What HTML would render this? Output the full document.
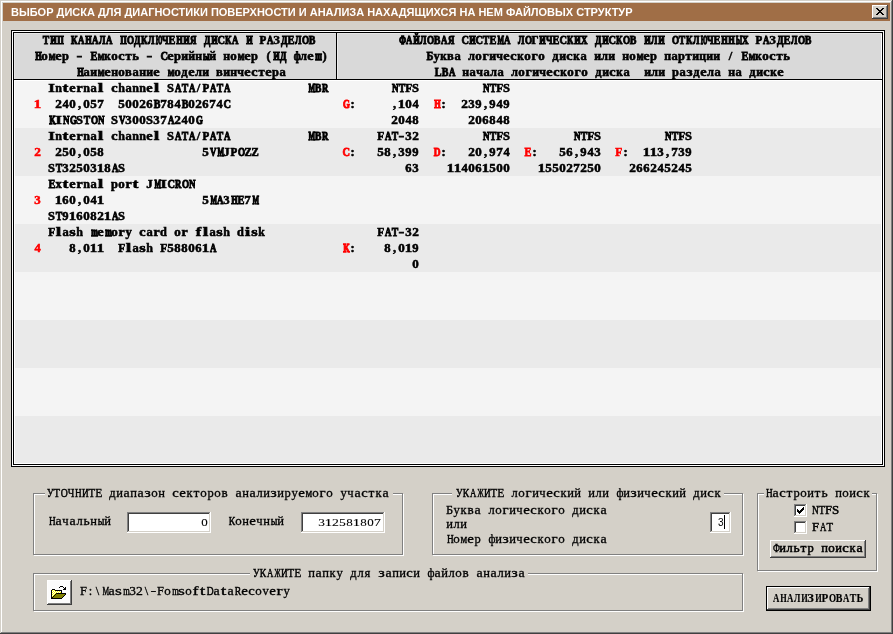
<!DOCTYPE html>
<html><head><meta charset="utf-8">
<style>
html,body{margin:0;padding:0;}
body{width:893px;height:634px;overflow:hidden;position:relative;background:#D4D0C8;}
.a{position:absolute;}
.ln,.hd,.lb,.title{will-change:transform;}
.ln,.hd,.lb,.title{position:absolute;white-space:pre;color:#000;}
.ln,.hd{font-family:"Liberation Serif",serif;font-weight:bold;font-size:12.5px;line-height:16px;-webkit-text-stroke:0.55px #000;}
.ln i,.hd i,.lb i{font-style:normal;display:inline-block;width:7px;text-align:center;}
.ln{left:0;}
.r{color:#FF0000;-webkit-text-stroke-color:#FF0000;}
.lb{font-family:"Liberation Serif",serif;font-size:12.5px;line-height:16px;-webkit-text-stroke:0.3px #000;}
.numc{font-size:11px !important;-webkit-text-stroke:0.1px #000 !important;}
.num{position:absolute;white-space:pre;color:#000;will-change:transform;font-family:"Liberation Sans",sans-serif;font-size:10px;letter-spacing:1.44px;line-height:16px;}
.title{font-family:"Liberation Sans",sans-serif;font-weight:bold;font-size:11px;line-height:18px;color:#FFFFFF;}
</style></head><body>
<div class="a" style="left:1px;top:1px;width:890px;height:1px;background:#FFFFFF;"></div>
<div class="a" style="left:1px;top:1px;width:1px;height:631px;background:#FFFFFF;"></div>
<div class="a" style="left:891px;top:1px;width:1px;height:632px;background:#808080;"></div>
<div class="a" style="left:1px;top:632px;width:891px;height:1px;background:#808080;"></div>
<div class="a" style="left:892px;top:0px;width:1px;height:634px;background:#404040;"></div>
<div class="a" style="left:0px;top:633px;width:893px;height:1px;background:#404040;"></div>
<div class="a" style="left:3px;top:3px;width:887px;height:18px;background:#A06E46;"></div>
<div class="title" style="left:11px;top:3px;">ВЫБОР ДИСКА ДЛЯ ДИАГНОСТИКИ ПОВЕРХНОСТИ И АНАЛИЗА НАХАДЯЩИХСЯ НА НЕМ ФАЙЛОВЫХ СТРУКТУР</div>
<div class="a" style="left:872px;top:5px;width:16px;height:14px;background:#D4D0C8;"></div>
<div class="a" style="left:872px;top:5px;width:16px;height:1px;background:#FFFFFF;"></div>
<div class="a" style="left:872px;top:5px;width:1px;height:14px;background:#FFFFFF;"></div>
<div class="a" style="left:873px;top:17px;width:15px;height:1px;background:#808080;"></div>
<div class="a" style="left:886px;top:6px;width:1px;height:13px;background:#808080;"></div>
<div class="a" style="left:872px;top:18px;width:16px;height:1px;background:#404040;"></div>
<div class="a" style="left:887px;top:5px;width:1px;height:14px;background:#404040;"></div>
<svg class="a" style="left:0;top:0" width="893" height="30"><rect x="876" y="8" width="1" height="1" fill="#000"/><rect x="876" y="14" width="1" height="1" fill="#000"/><rect x="877" y="8" width="1" height="1" fill="#000"/><rect x="877" y="9" width="1" height="1" fill="#000"/><rect x="877" y="13" width="1" height="1" fill="#000"/><rect x="877" y="14" width="1" height="1" fill="#000"/><rect x="878" y="9" width="1" height="1" fill="#000"/><rect x="878" y="10" width="1" height="1" fill="#000"/><rect x="878" y="12" width="1" height="1" fill="#000"/><rect x="878" y="13" width="1" height="1" fill="#000"/><rect x="879" y="10" width="1" height="1" fill="#000"/><rect x="879" y="11" width="1" height="1" fill="#000"/><rect x="879" y="12" width="1" height="1" fill="#000"/><rect x="880" y="10" width="1" height="1" fill="#000"/><rect x="880" y="11" width="1" height="1" fill="#000"/><rect x="880" y="12" width="1" height="1" fill="#000"/><rect x="881" y="9" width="1" height="1" fill="#000"/><rect x="881" y="10" width="1" height="1" fill="#000"/><rect x="881" y="12" width="1" height="1" fill="#000"/><rect x="881" y="13" width="1" height="1" fill="#000"/><rect x="882" y="8" width="1" height="1" fill="#000"/><rect x="882" y="9" width="1" height="1" fill="#000"/><rect x="882" y="13" width="1" height="1" fill="#000"/><rect x="882" y="14" width="1" height="1" fill="#000"/><rect x="883" y="8" width="1" height="1" fill="#000"/><rect x="883" y="14" width="1" height="1" fill="#000"/></svg>
<div class="a" style="left:11px;top:30px;width:874px;height:437px;background:#000;"></div>
<div class="a" style="left:12px;top:31px;width:872px;height:435px;background:#FFFFFF;"></div>
<div class="a" style="left:13px;top:32px;width:870px;height:433px;background:#000;"></div>
<div class="a" style="left:14px;top:33px;width:868px;height:431px;background:#FFFFFF;"></div>
<div class="a" style="left:15px;top:34px;width:866px;height:45px;background:#D9D9D9;"></div>
<div class="a" style="left:14px;top:33px;width:868px;height:1px;background:#E6E6E6;"></div>
<div class="a" style="left:14px;top:33px;width:1px;height:46px;background:#E6E6E6;"></div>
<div class="a" style="left:14px;top:79px;width:868px;height:1px;background:#000;"></div>
<div class="a" style="left:336px;top:33px;width:1px;height:46px;background:#000;"></div>
<div class="a" style="left:337px;top:34px;width:1px;height:45px;background:#ECECEC;"></div>
<div class="a" style="left:15px;top:81px;width:866px;height:47px;background:#F4F4F4;"></div>
<div class="a" style="left:15px;top:128px;width:866px;height:48px;background:#EAEAEA;"></div>
<div class="a" style="left:15px;top:176px;width:866px;height:48px;background:#F4F4F4;"></div>
<div class="a" style="left:15px;top:224px;width:866px;height:48px;background:#EAEAEA;"></div>
<div class="a" style="left:15px;top:272px;width:866px;height:48px;background:#F4F4F4;"></div>
<div class="a" style="left:15px;top:320px;width:866px;height:48px;background:#EAEAEA;"></div>
<div class="a" style="left:15px;top:368px;width:866px;height:48px;background:#F4F4F4;"></div>
<div class="a" style="left:15px;top:416px;width:866px;height:47px;background:#EAEAEA;"></div>
<div class="hd" style="left:42px;top:32px;"><i style="transform:scaleX(0.780);-webkit-text-stroke-width:0.90px">Т</i><i style="transform:scaleX(0.667);-webkit-text-stroke-width:1.24px">И</i><i style="transform:scaleX(0.671);-webkit-text-stroke-width:1.22px">П</i><i> </i><i style="transform:scaleX(0.709);-webkit-text-stroke-width:1.09px">К</i><i style="transform:scaleX(0.703);-webkit-text-stroke-width:1.11px">А</i><i style="transform:scaleX(0.667);-webkit-text-stroke-width:1.24px">Н</i><i style="transform:scaleX(0.703);-webkit-text-stroke-width:1.11px">А</i><i style="transform:scaleX(0.683);-webkit-text-stroke-width:1.18px">Л</i><i style="transform:scaleX(0.703);-webkit-text-stroke-width:1.11px">А</i><i> </i><i style="transform:scaleX(0.671);-webkit-text-stroke-width:1.22px">П</i><i style="transform:scaleX(0.729);-webkit-text-stroke-width:1.03px">О</i><i style="transform:scaleX(0.741);-webkit-text-stroke-width:1.00px">Д</i><i style="transform:scaleX(0.709);-webkit-text-stroke-width:1.09px">К</i><i style="transform:scaleX(0.683);-webkit-text-stroke-width:1.18px">Л</i><i style="transform:scaleX(0.468);-webkit-text-stroke-width:1.30px">Ю</i><i style="transform:scaleX(0.704);-webkit-text-stroke-width:1.11px">Ч</i><i style="transform:scaleX(0.829);-webkit-text-stroke-width:0.80px">Е</i><i style="transform:scaleX(0.667);-webkit-text-stroke-width:1.24px">Н</i><i style="transform:scaleX(0.667);-webkit-text-stroke-width:1.24px">И</i><i style="transform:scaleX(0.704);-webkit-text-stroke-width:1.11px">Я</i><i> </i><i style="transform:scaleX(0.741);-webkit-text-stroke-width:1.00px">Д</i><i style="transform:scaleX(0.667);-webkit-text-stroke-width:1.24px">И</i><i style="transform:scaleX(0.831);-webkit-text-stroke-width:0.80px">С</i><i style="transform:scaleX(0.709);-webkit-text-stroke-width:1.09px">К</i><i style="transform:scaleX(0.703);-webkit-text-stroke-width:1.11px">А</i><i> </i><i style="transform:scaleX(0.667);-webkit-text-stroke-width:1.24px">И</i><i> </i><i style="transform:scaleX(0.877);-webkit-text-stroke-width:0.71px">Р</i><i style="transform:scaleX(0.703);-webkit-text-stroke-width:1.11px">А</i><i>З</i><i style="transform:scaleX(0.741);-webkit-text-stroke-width:1.00px">Д</i><i style="transform:scaleX(0.829);-webkit-text-stroke-width:0.80px">Е</i><i style="transform:scaleX(0.683);-webkit-text-stroke-width:1.18px">Л</i><i style="transform:scaleX(0.729);-webkit-text-stroke-width:1.03px">О</i><i style="transform:scaleX(0.797);-webkit-text-stroke-width:0.87px">В</i></div>
<div class="hd" style="left:34px;top:48px;"><i style="transform:scaleX(0.667);-webkit-text-stroke-width:1.24px">Н</i><i style="transform:scaleX(1.038)">о</i><i style="transform:scaleX(0.795);-webkit-text-stroke-width:0.87px">м</i><i style="transform:scaleX(1.146)">е</i><i style="transform:scaleX(0.986)">р</i><i> </i><i style="transform:scaleX(1.386)">-</i><i> </i><i style="transform:scaleX(0.829);-webkit-text-stroke-width:0.80px">Е</i><i style="transform:scaleX(0.795);-webkit-text-stroke-width:0.87px">м</i><i style="transform:scaleX(0.897);-webkit-text-stroke-width:0.68px">к</i><i style="transform:scaleX(1.038)">о</i><i style="transform:scaleX(1.144)">с</i><i>т</i><i>ь</i><i> </i><i style="transform:scaleX(1.386)">-</i><i> </i><i style="transform:scaleX(0.831);-webkit-text-stroke-width:0.80px">С</i><i style="transform:scaleX(1.146)">е</i><i style="transform:scaleX(0.986)">р</i><i style="transform:scaleX(0.948);-webkit-text-stroke-width:0.61px">и</i><i style="transform:scaleX(0.948);-webkit-text-stroke-width:0.61px">й</i><i style="transform:scaleX(0.948);-webkit-text-stroke-width:0.61px">н</i><i style="transform:scaleX(0.681);-webkit-text-stroke-width:1.18px">ы</i><i style="transform:scaleX(0.948);-webkit-text-stroke-width:0.61px">й</i><i> </i><i style="transform:scaleX(0.948);-webkit-text-stroke-width:0.61px">н</i><i style="transform:scaleX(1.038)">о</i><i style="transform:scaleX(0.795);-webkit-text-stroke-width:0.87px">м</i><i style="transform:scaleX(1.146)">е</i><i style="transform:scaleX(0.986)">р</i><i> </i><i>(</i><i style="transform:scaleX(0.667);-webkit-text-stroke-width:1.24px">И</i><i style="transform:scaleX(0.741);-webkit-text-stroke-width:1.00px">Д</i><i> </i><i style="transform:scaleX(0.797);-webkit-text-stroke-width:0.87px">ф</i><i style="transform:scaleX(0.949);-webkit-text-stroke-width:0.61px">л</i><i style="transform:scaleX(1.146)">е</i><i style="transform:scaleX(0.627);-webkit-text-stroke-width:1.30px">ш</i><i>)</i></div>
<div class="hd" style="left:76px;top:64px;"><i style="transform:scaleX(0.667);-webkit-text-stroke-width:1.24px">Н</i><i>а</i><i style="transform:scaleX(0.948);-webkit-text-stroke-width:0.61px">и</i><i style="transform:scaleX(0.795);-webkit-text-stroke-width:0.87px">м</i><i style="transform:scaleX(1.146)">е</i><i style="transform:scaleX(0.948);-webkit-text-stroke-width:0.61px">н</i><i style="transform:scaleX(1.038)">о</i><i>в</i><i>а</i><i style="transform:scaleX(0.948);-webkit-text-stroke-width:0.61px">н</i><i style="transform:scaleX(0.948);-webkit-text-stroke-width:0.61px">и</i><i style="transform:scaleX(1.146)">е</i><i> </i><i style="transform:scaleX(0.795);-webkit-text-stroke-width:0.87px">м</i><i style="transform:scaleX(1.038)">о</i><i>д</i><i style="transform:scaleX(1.146)">е</i><i style="transform:scaleX(0.949);-webkit-text-stroke-width:0.61px">л</i><i style="transform:scaleX(0.948);-webkit-text-stroke-width:0.61px">и</i><i> </i><i>в</i><i style="transform:scaleX(0.948);-webkit-text-stroke-width:0.61px">и</i><i style="transform:scaleX(0.948);-webkit-text-stroke-width:0.61px">н</i><i style="transform:scaleX(0.948);-webkit-text-stroke-width:0.61px">ч</i><i style="transform:scaleX(1.146)">е</i><i style="transform:scaleX(1.144)">с</i><i>т</i><i style="transform:scaleX(1.146)">е</i><i style="transform:scaleX(0.986)">р</i><i>а</i></div>
<div class="hd" style="left:398px;top:32px;"><i style="transform:scaleX(0.634);-webkit-text-stroke-width:1.30px">Ф</i><i style="transform:scaleX(0.703);-webkit-text-stroke-width:1.11px">А</i><i style="transform:scaleX(0.667);-webkit-text-stroke-width:1.24px">Й</i><i style="transform:scaleX(0.683);-webkit-text-stroke-width:1.18px">Л</i><i style="transform:scaleX(0.729);-webkit-text-stroke-width:1.03px">О</i><i style="transform:scaleX(0.797);-webkit-text-stroke-width:0.87px">В</i><i style="transform:scaleX(0.703);-webkit-text-stroke-width:1.11px">А</i><i style="transform:scaleX(0.704);-webkit-text-stroke-width:1.11px">Я</i><i> </i><i style="transform:scaleX(0.831);-webkit-text-stroke-width:0.80px">С</i><i style="transform:scaleX(0.667);-webkit-text-stroke-width:1.24px">И</i><i style="transform:scaleX(0.831);-webkit-text-stroke-width:0.80px">С</i><i style="transform:scaleX(0.780);-webkit-text-stroke-width:0.90px">Т</i><i style="transform:scaleX(0.829);-webkit-text-stroke-width:0.80px">Е</i><i style="transform:scaleX(0.552);-webkit-text-stroke-width:1.30px">М</i><i style="transform:scaleX(0.703);-webkit-text-stroke-width:1.11px">А</i><i> </i><i style="transform:scaleX(0.683);-webkit-text-stroke-width:1.18px">Л</i><i style="transform:scaleX(0.729);-webkit-text-stroke-width:1.03px">О</i><i style="transform:scaleX(0.879);-webkit-text-stroke-width:0.71px">Г</i><i style="transform:scaleX(0.667);-webkit-text-stroke-width:1.24px">И</i><i style="transform:scaleX(0.704);-webkit-text-stroke-width:1.11px">Ч</i><i style="transform:scaleX(0.829);-webkit-text-stroke-width:0.80px">Е</i><i style="transform:scaleX(0.831);-webkit-text-stroke-width:0.80px">С</i><i style="transform:scaleX(0.709);-webkit-text-stroke-width:1.09px">К</i><i style="transform:scaleX(0.667);-webkit-text-stroke-width:1.24px">И</i><i style="transform:scaleX(0.717);-webkit-text-stroke-width:1.07px">Х</i><i> </i><i style="transform:scaleX(0.741);-webkit-text-stroke-width:1.00px">Д</i><i style="transform:scaleX(0.667);-webkit-text-stroke-width:1.24px">И</i><i style="transform:scaleX(0.831);-webkit-text-stroke-width:0.80px">С</i><i style="transform:scaleX(0.709);-webkit-text-stroke-width:1.09px">К</i><i style="transform:scaleX(0.729);-webkit-text-stroke-width:1.03px">О</i><i style="transform:scaleX(0.797);-webkit-text-stroke-width:0.87px">В</i><i> </i><i style="transform:scaleX(0.667);-webkit-text-stroke-width:1.24px">И</i><i style="transform:scaleX(0.683);-webkit-text-stroke-width:1.18px">Л</i><i style="transform:scaleX(0.667);-webkit-text-stroke-width:1.24px">И</i><i> </i><i style="transform:scaleX(0.729);-webkit-text-stroke-width:1.03px">О</i><i style="transform:scaleX(0.780);-webkit-text-stroke-width:0.90px">Т</i><i style="transform:scaleX(0.709);-webkit-text-stroke-width:1.09px">К</i><i style="transform:scaleX(0.683);-webkit-text-stroke-width:1.18px">Л</i><i style="transform:scaleX(0.468);-webkit-text-stroke-width:1.30px">Ю</i><i style="transform:scaleX(0.704);-webkit-text-stroke-width:1.11px">Ч</i><i style="transform:scaleX(0.829);-webkit-text-stroke-width:0.80px">Е</i><i style="transform:scaleX(0.667);-webkit-text-stroke-width:1.24px">Н</i><i style="transform:scaleX(0.667);-webkit-text-stroke-width:1.24px">Н</i><i style="transform:scaleX(0.523);-webkit-text-stroke-width:1.30px">Ы</i><i style="transform:scaleX(0.717);-webkit-text-stroke-width:1.07px">Х</i><i> </i><i style="transform:scaleX(0.877);-webkit-text-stroke-width:0.71px">Р</i><i style="transform:scaleX(0.703);-webkit-text-stroke-width:1.11px">А</i><i>З</i><i style="transform:scaleX(0.741);-webkit-text-stroke-width:1.00px">Д</i><i style="transform:scaleX(0.829);-webkit-text-stroke-width:0.80px">Е</i><i style="transform:scaleX(0.683);-webkit-text-stroke-width:1.18px">Л</i><i style="transform:scaleX(0.729);-webkit-text-stroke-width:1.03px">О</i><i style="transform:scaleX(0.797);-webkit-text-stroke-width:0.87px">В</i></div>
<div class="hd" style="left:426px;top:48px;"><i style="transform:scaleX(0.837);-webkit-text-stroke-width:0.79px">Б</i><i>у</i><i style="transform:scaleX(0.897);-webkit-text-stroke-width:0.68px">к</i><i>в</i><i>а</i><i> </i><i style="transform:scaleX(0.949);-webkit-text-stroke-width:0.61px">л</i><i style="transform:scaleX(1.038)">о</i><i style="transform:scaleX(1.095)">г</i><i style="transform:scaleX(0.948);-webkit-text-stroke-width:0.61px">и</i><i style="transform:scaleX(0.948);-webkit-text-stroke-width:0.61px">ч</i><i style="transform:scaleX(1.146)">е</i><i style="transform:scaleX(1.144)">с</i><i style="transform:scaleX(0.897);-webkit-text-stroke-width:0.68px">к</i><i style="transform:scaleX(1.038)">о</i><i style="transform:scaleX(1.095)">г</i><i style="transform:scaleX(1.038)">о</i><i> </i><i>д</i><i style="transform:scaleX(0.948);-webkit-text-stroke-width:0.61px">и</i><i style="transform:scaleX(1.144)">с</i><i style="transform:scaleX(0.897);-webkit-text-stroke-width:0.68px">к</i><i>а</i><i> </i><i style="transform:scaleX(0.948);-webkit-text-stroke-width:0.61px">и</i><i style="transform:scaleX(0.949);-webkit-text-stroke-width:0.61px">л</i><i style="transform:scaleX(0.948);-webkit-text-stroke-width:0.61px">и</i><i> </i><i style="transform:scaleX(0.948);-webkit-text-stroke-width:0.61px">н</i><i style="transform:scaleX(1.038)">о</i><i style="transform:scaleX(0.795);-webkit-text-stroke-width:0.87px">м</i><i style="transform:scaleX(1.146)">е</i><i style="transform:scaleX(0.986)">р</i><i> </i><i style="transform:scaleX(0.948);-webkit-text-stroke-width:0.61px">п</i><i>а</i><i style="transform:scaleX(0.986)">р</i><i>т</i><i style="transform:scaleX(0.948);-webkit-text-stroke-width:0.61px">и</i><i style="transform:scaleX(0.930);-webkit-text-stroke-width:0.64px">ц</i><i style="transform:scaleX(0.948);-webkit-text-stroke-width:0.61px">и</i><i style="transform:scaleX(0.948);-webkit-text-stroke-width:0.61px">и</i><i> </i><i>/</i><i> </i><i style="transform:scaleX(0.829);-webkit-text-stroke-width:0.80px">Е</i><i style="transform:scaleX(0.795);-webkit-text-stroke-width:0.87px">м</i><i style="transform:scaleX(0.897);-webkit-text-stroke-width:0.68px">к</i><i style="transform:scaleX(1.038)">о</i><i style="transform:scaleX(1.144)">с</i><i>т</i><i>ь</i></div>
<div class="hd" style="left:434px;top:64px;"><i style="transform:scaleX(0.816);-webkit-text-stroke-width:0.83px">L</i><i style="transform:scaleX(0.797);-webkit-text-stroke-width:0.87px">B</i><i style="transform:scaleX(0.703);-webkit-text-stroke-width:1.11px">A</i><i> </i><i style="transform:scaleX(0.948);-webkit-text-stroke-width:0.61px">н</i><i>а</i><i style="transform:scaleX(0.948);-webkit-text-stroke-width:0.61px">ч</i><i>а</i><i style="transform:scaleX(0.949);-webkit-text-stroke-width:0.61px">л</i><i>а</i><i> </i><i style="transform:scaleX(0.949);-webkit-text-stroke-width:0.61px">л</i><i style="transform:scaleX(1.038)">о</i><i style="transform:scaleX(1.095)">г</i><i style="transform:scaleX(0.948);-webkit-text-stroke-width:0.61px">и</i><i style="transform:scaleX(0.948);-webkit-text-stroke-width:0.61px">ч</i><i style="transform:scaleX(1.146)">е</i><i style="transform:scaleX(1.144)">с</i><i style="transform:scaleX(0.897);-webkit-text-stroke-width:0.68px">к</i><i style="transform:scaleX(1.038)">о</i><i style="transform:scaleX(1.095)">г</i><i style="transform:scaleX(1.038)">о</i><i> </i><i>д</i><i style="transform:scaleX(0.948);-webkit-text-stroke-width:0.61px">и</i><i style="transform:scaleX(1.144)">с</i><i style="transform:scaleX(0.897);-webkit-text-stroke-width:0.68px">к</i><i>а</i><i> </i><i> </i><i style="transform:scaleX(0.948);-webkit-text-stroke-width:0.61px">и</i><i style="transform:scaleX(0.949);-webkit-text-stroke-width:0.61px">л</i><i style="transform:scaleX(0.948);-webkit-text-stroke-width:0.61px">и</i><i> </i><i style="transform:scaleX(0.986)">р</i><i>а</i><i style="transform:scaleX(1.205)">з</i><i>д</i><i style="transform:scaleX(1.146)">е</i><i style="transform:scaleX(0.949);-webkit-text-stroke-width:0.61px">л</i><i>а</i><i> </i><i style="transform:scaleX(0.948);-webkit-text-stroke-width:0.61px">н</i><i>а</i><i> </i><i>д</i><i style="transform:scaleX(0.948);-webkit-text-stroke-width:0.61px">и</i><i style="transform:scaleX(1.144)">с</i><i style="transform:scaleX(0.897);-webkit-text-stroke-width:0.68px">к</i><i style="transform:scaleX(1.146)">е</i></div>
<div class="a" style="left:34px;top:0">
<div class="ln" style="top:80px"><i> </i><i> </i><i style="transform:scaleX(1.367)">I</i><i style="transform:scaleX(0.965)">n</i><i style="transform:scaleX(1.408)">t</i><i style="transform:scaleX(1.146)">e</i><i style="transform:scaleX(1.112)">r</i><i style="transform:scaleX(0.965)">n</i><i>a</i><i style="transform:scaleX(1.600)">l</i><i> </i><i style="transform:scaleX(1.144)">c</i><i style="transform:scaleX(0.961)">h</i><i>a</i><i style="transform:scaleX(0.965)">n</i><i style="transform:scaleX(0.965)">n</i><i style="transform:scaleX(1.146)">e</i><i style="transform:scaleX(1.600)">l</i><i> </i><i>S</i><i style="transform:scaleX(0.703);-webkit-text-stroke-width:1.11px">A</i><i style="transform:scaleX(0.780);-webkit-text-stroke-width:0.90px">T</i><i style="transform:scaleX(0.703);-webkit-text-stroke-width:1.11px">A</i><i>/</i><i style="transform:scaleX(0.877);-webkit-text-stroke-width:0.71px">P</i><i style="transform:scaleX(0.703);-webkit-text-stroke-width:1.11px">A</i><i style="transform:scaleX(0.780);-webkit-text-stroke-width:0.90px">T</i><i style="transform:scaleX(0.703);-webkit-text-stroke-width:1.11px">A</i><i> </i><i> </i><i> </i><i> </i><i> </i><i> </i><i> </i><i> </i><i> </i><i> </i><i> </i><i style="transform:scaleX(0.552);-webkit-text-stroke-width:1.30px">M</i><i style="transform:scaleX(0.797);-webkit-text-stroke-width:0.87px">B</i><i style="transform:scaleX(0.695);-webkit-text-stroke-width:1.14px">R</i><i> </i><i> </i><i> </i><i> </i><i> </i><i> </i><i> </i><i> </i><i> </i><i style="transform:scaleX(0.719);-webkit-text-stroke-width:1.06px">N</i><i style="transform:scaleX(0.780);-webkit-text-stroke-width:0.90px">T</i><i style="transform:scaleX(0.909);-webkit-text-stroke-width:0.67px">F</i><i>S</i><i> </i><i> </i><i> </i><i> </i><i> </i><i> </i><i> </i><i> </i><i> </i><i style="transform:scaleX(0.719);-webkit-text-stroke-width:1.06px">N</i><i style="transform:scaleX(0.780);-webkit-text-stroke-width:0.90px">T</i><i style="transform:scaleX(0.909);-webkit-text-stroke-width:0.67px">F</i><i>S</i></div>
<div class="ln" style="top:96px"><i style="transform:scaleX(1.195);color:#FF0000;-webkit-text-stroke-color:#FF0000">1</i><i> </i><i> </i><i style="transform:scaleX(1.060)">2</i><i>4</i><i style="transform:scaleX(1.038)">0</i><i>,</i><i style="transform:scaleX(1.038)">0</i><i style="transform:scaleX(1.039)">5</i><i style="transform:scaleX(1.051)">7</i><i> </i><i> </i><i style="transform:scaleX(1.039)">5</i><i style="transform:scaleX(1.038)">0</i><i style="transform:scaleX(1.038)">0</i><i style="transform:scaleX(1.060)">2</i><i style="transform:scaleX(1.008)">6</i><i style="transform:scaleX(0.797);-webkit-text-stroke-width:0.87px">B</i><i style="transform:scaleX(1.051)">7</i><i style="transform:scaleX(1.015)">8</i><i>4</i><i style="transform:scaleX(0.797);-webkit-text-stroke-width:0.87px">B</i><i style="transform:scaleX(1.038)">0</i><i style="transform:scaleX(1.060)">2</i><i style="transform:scaleX(1.008)">6</i><i style="transform:scaleX(1.051)">7</i><i>4</i><i style="transform:scaleX(0.831);-webkit-text-stroke-width:0.80px">C</i><i> </i><i> </i><i> </i><i> </i><i> </i><i> </i><i> </i><i> </i><i> </i><i> </i><i> </i><i> </i><i> </i><i> </i><i> </i><i> </i><i style="transform:scaleX(0.707);-webkit-text-stroke-width:1.10px;color:#FF0000;-webkit-text-stroke-color:#FF0000">G</i><i>:</i><i> </i><i> </i><i> </i><i> </i><i> </i><i>,</i><i style="transform:scaleX(1.195)">1</i><i style="transform:scaleX(1.038)">0</i><i>4</i><i> </i><i> </i><i style="transform:scaleX(0.667);-webkit-text-stroke-width:1.24px;color:#FF0000;-webkit-text-stroke-color:#FF0000">H</i><i>:</i><i> </i><i> </i><i style="transform:scaleX(1.060)">2</i><i style="transform:scaleX(1.028)">3</i><i style="transform:scaleX(1.008)">9</i><i>,</i><i style="transform:scaleX(1.008)">9</i><i>4</i><i style="transform:scaleX(1.008)">9</i></div>
<div class="ln" style="top:112px"><i> </i><i> </i><i style="transform:scaleX(0.659);-webkit-text-stroke-width:1.27px">K</i><i style="transform:scaleX(1.367)">I</i><i style="transform:scaleX(0.719);-webkit-text-stroke-width:1.06px">N</i><i style="transform:scaleX(0.707);-webkit-text-stroke-width:1.10px">G</i><i>S</i><i style="transform:scaleX(0.780);-webkit-text-stroke-width:0.90px">T</i><i style="transform:scaleX(0.729);-webkit-text-stroke-width:1.03px">O</i><i style="transform:scaleX(0.719);-webkit-text-stroke-width:1.06px">N</i><i> </i><i>S</i><i style="transform:scaleX(0.709);-webkit-text-stroke-width:1.09px">V</i><i style="transform:scaleX(1.028)">3</i><i style="transform:scaleX(1.038)">0</i><i style="transform:scaleX(1.038)">0</i><i>S</i><i style="transform:scaleX(1.028)">3</i><i style="transform:scaleX(1.051)">7</i><i style="transform:scaleX(0.703);-webkit-text-stroke-width:1.11px">A</i><i style="transform:scaleX(1.060)">2</i><i>4</i><i style="transform:scaleX(1.038)">0</i><i style="transform:scaleX(0.707);-webkit-text-stroke-width:1.10px">G</i><i> </i><i> </i><i> </i><i> </i><i> </i><i> </i><i> </i><i> </i><i> </i><i> </i><i> </i><i> </i><i> </i><i> </i><i> </i><i> </i><i> </i><i> </i><i> </i><i> </i><i> </i><i> </i><i> </i><i> </i><i> </i><i> </i><i> </i><i style="transform:scaleX(1.060)">2</i><i style="transform:scaleX(1.038)">0</i><i>4</i><i style="transform:scaleX(1.015)">8</i><i> </i><i> </i><i> </i><i> </i><i> </i><i> </i><i> </i><i style="transform:scaleX(1.060)">2</i><i style="transform:scaleX(1.038)">0</i><i style="transform:scaleX(1.008)">6</i><i style="transform:scaleX(1.015)">8</i><i>4</i><i style="transform:scaleX(1.015)">8</i></div>
<div class="ln" style="top:128px"><i> </i><i> </i><i style="transform:scaleX(1.367)">I</i><i style="transform:scaleX(0.965)">n</i><i style="transform:scaleX(1.408)">t</i><i style="transform:scaleX(1.146)">e</i><i style="transform:scaleX(1.112)">r</i><i style="transform:scaleX(0.965)">n</i><i>a</i><i style="transform:scaleX(1.600)">l</i><i> </i><i style="transform:scaleX(1.144)">c</i><i style="transform:scaleX(0.961)">h</i><i>a</i><i style="transform:scaleX(0.965)">n</i><i style="transform:scaleX(0.965)">n</i><i style="transform:scaleX(1.146)">e</i><i style="transform:scaleX(1.600)">l</i><i> </i><i>S</i><i style="transform:scaleX(0.703);-webkit-text-stroke-width:1.11px">A</i><i style="transform:scaleX(0.780);-webkit-text-stroke-width:0.90px">T</i><i style="transform:scaleX(0.703);-webkit-text-stroke-width:1.11px">A</i><i>/</i><i style="transform:scaleX(0.877);-webkit-text-stroke-width:0.71px">P</i><i style="transform:scaleX(0.703);-webkit-text-stroke-width:1.11px">A</i><i style="transform:scaleX(0.780);-webkit-text-stroke-width:0.90px">T</i><i style="transform:scaleX(0.703);-webkit-text-stroke-width:1.11px">A</i><i> </i><i> </i><i> </i><i> </i><i> </i><i> </i><i> </i><i> </i><i> </i><i> </i><i> </i><i style="transform:scaleX(0.552);-webkit-text-stroke-width:1.30px">M</i><i style="transform:scaleX(0.797);-webkit-text-stroke-width:0.87px">B</i><i style="transform:scaleX(0.695);-webkit-text-stroke-width:1.14px">R</i><i> </i><i> </i><i> </i><i> </i><i> </i><i> </i><i> </i><i style="transform:scaleX(0.909);-webkit-text-stroke-width:0.67px">F</i><i style="transform:scaleX(0.703);-webkit-text-stroke-width:1.11px">A</i><i style="transform:scaleX(0.780);-webkit-text-stroke-width:0.90px">T</i><i style="transform:scaleX(1.386)">-</i><i style="transform:scaleX(1.028)">3</i><i style="transform:scaleX(1.060)">2</i><i> </i><i> </i><i> </i><i> </i><i> </i><i> </i><i> </i><i> </i><i> </i><i style="transform:scaleX(0.719);-webkit-text-stroke-width:1.06px">N</i><i style="transform:scaleX(0.780);-webkit-text-stroke-width:0.90px">T</i><i style="transform:scaleX(0.909);-webkit-text-stroke-width:0.67px">F</i><i>S</i><i> </i><i> </i><i> </i><i> </i><i> </i><i> </i><i> </i><i> </i><i> </i><i style="transform:scaleX(0.719);-webkit-text-stroke-width:1.06px">N</i><i style="transform:scaleX(0.780);-webkit-text-stroke-width:0.90px">T</i><i style="transform:scaleX(0.909);-webkit-text-stroke-width:0.67px">F</i><i>S</i><i> </i><i> </i><i> </i><i> </i><i> </i><i> </i><i> </i><i> </i><i> </i><i style="transform:scaleX(0.719);-webkit-text-stroke-width:1.06px">N</i><i style="transform:scaleX(0.780);-webkit-text-stroke-width:0.90px">T</i><i style="transform:scaleX(0.909);-webkit-text-stroke-width:0.67px">F</i><i>S</i></div>
<div class="ln" style="top:144px"><i style="transform:scaleX(1.060);color:#FF0000;-webkit-text-stroke-color:#FF0000">2</i><i> </i><i> </i><i style="transform:scaleX(1.060)">2</i><i style="transform:scaleX(1.039)">5</i><i style="transform:scaleX(1.038)">0</i><i>,</i><i style="transform:scaleX(1.038)">0</i><i style="transform:scaleX(1.039)">5</i><i style="transform:scaleX(1.015)">8</i><i> </i><i> </i><i> </i><i> </i><i> </i><i> </i><i> </i><i> </i><i> </i><i> </i><i> </i><i> </i><i> </i><i> </i><i style="transform:scaleX(1.039)">5</i><i style="transform:scaleX(0.709);-webkit-text-stroke-width:1.09px">V</i><i style="transform:scaleX(0.552);-webkit-text-stroke-width:1.30px">M</i><i style="transform:scaleX(1.028)">J</i><i style="transform:scaleX(0.877);-webkit-text-stroke-width:0.71px">P</i><i style="transform:scaleX(0.729);-webkit-text-stroke-width:1.03px">O</i><i style="transform:scaleX(0.873);-webkit-text-stroke-width:0.72px">Z</i><i style="transform:scaleX(0.873);-webkit-text-stroke-width:0.72px">Z</i><i> </i><i> </i><i> </i><i> </i><i> </i><i> </i><i> </i><i> </i><i> </i><i> </i><i> </i><i> </i><i style="transform:scaleX(0.831);-webkit-text-stroke-width:0.80px;color:#FF0000;-webkit-text-stroke-color:#FF0000">C</i><i>:</i><i> </i><i> </i><i> </i><i style="transform:scaleX(1.039)">5</i><i style="transform:scaleX(1.015)">8</i><i>,</i><i style="transform:scaleX(1.028)">3</i><i style="transform:scaleX(1.008)">9</i><i style="transform:scaleX(1.008)">9</i><i> </i><i> </i><i style="transform:scaleX(0.756);-webkit-text-stroke-width:0.96px;color:#FF0000;-webkit-text-stroke-color:#FF0000">D</i><i>:</i><i> </i><i> </i><i> </i><i style="transform:scaleX(1.060)">2</i><i style="transform:scaleX(1.038)">0</i><i>,</i><i style="transform:scaleX(1.008)">9</i><i style="transform:scaleX(1.051)">7</i><i>4</i><i> </i><i> </i><i style="transform:scaleX(0.829);-webkit-text-stroke-width:0.80px;color:#FF0000;-webkit-text-stroke-color:#FF0000">E</i><i>:</i><i> </i><i> </i><i> </i><i style="transform:scaleX(1.039)">5</i><i style="transform:scaleX(1.008)">6</i><i>,</i><i style="transform:scaleX(1.008)">9</i><i>4</i><i style="transform:scaleX(1.028)">3</i><i> </i><i> </i><i style="transform:scaleX(0.909);-webkit-text-stroke-width:0.67px;color:#FF0000;-webkit-text-stroke-color:#FF0000">F</i><i>:</i><i> </i><i> </i><i style="transform:scaleX(1.195)">1</i><i style="transform:scaleX(1.195)">1</i><i style="transform:scaleX(1.028)">3</i><i>,</i><i style="transform:scaleX(1.051)">7</i><i style="transform:scaleX(1.028)">3</i><i style="transform:scaleX(1.008)">9</i></div>
<div class="ln" style="top:160px"><i> </i><i> </i><i>S</i><i style="transform:scaleX(0.780);-webkit-text-stroke-width:0.90px">T</i><i style="transform:scaleX(1.028)">3</i><i style="transform:scaleX(1.060)">2</i><i style="transform:scaleX(1.039)">5</i><i style="transform:scaleX(1.038)">0</i><i style="transform:scaleX(1.028)">3</i><i style="transform:scaleX(1.195)">1</i><i style="transform:scaleX(1.015)">8</i><i style="transform:scaleX(0.703);-webkit-text-stroke-width:1.11px">A</i><i>S</i><i> </i><i> </i><i> </i><i> </i><i> </i><i> </i><i> </i><i> </i><i> </i><i> </i><i> </i><i> </i><i> </i><i> </i><i> </i><i> </i><i> </i><i> </i><i> </i><i> </i><i> </i><i> </i><i> </i><i> </i><i> </i><i> </i><i> </i><i> </i><i> </i><i> </i><i> </i><i> </i><i> </i><i> </i><i> </i><i> </i><i> </i><i> </i><i> </i><i> </i><i style="transform:scaleX(1.008)">6</i><i style="transform:scaleX(1.028)">3</i><i> </i><i> </i><i> </i><i> </i><i style="transform:scaleX(1.195)">1</i><i style="transform:scaleX(1.195)">1</i><i>4</i><i style="transform:scaleX(1.038)">0</i><i style="transform:scaleX(1.008)">6</i><i style="transform:scaleX(1.195)">1</i><i style="transform:scaleX(1.039)">5</i><i style="transform:scaleX(1.038)">0</i><i style="transform:scaleX(1.038)">0</i><i> </i><i> </i><i> </i><i> </i><i style="transform:scaleX(1.195)">1</i><i style="transform:scaleX(1.039)">5</i><i style="transform:scaleX(1.039)">5</i><i style="transform:scaleX(1.038)">0</i><i style="transform:scaleX(1.060)">2</i><i style="transform:scaleX(1.051)">7</i><i style="transform:scaleX(1.060)">2</i><i style="transform:scaleX(1.039)">5</i><i style="transform:scaleX(1.038)">0</i><i> </i><i> </i><i> </i><i> </i><i style="transform:scaleX(1.060)">2</i><i style="transform:scaleX(1.008)">6</i><i style="transform:scaleX(1.008)">6</i><i style="transform:scaleX(1.060)">2</i><i>4</i><i style="transform:scaleX(1.039)">5</i><i style="transform:scaleX(1.060)">2</i><i>4</i><i style="transform:scaleX(1.039)">5</i></div>
<div class="ln" style="top:176px"><i> </i><i> </i><i style="transform:scaleX(0.829);-webkit-text-stroke-width:0.80px">E</i><i>x</i><i style="transform:scaleX(1.408)">t</i><i style="transform:scaleX(1.146)">e</i><i style="transform:scaleX(1.112)">r</i><i style="transform:scaleX(0.965)">n</i><i>a</i><i style="transform:scaleX(1.600)">l</i><i> </i><i style="transform:scaleX(0.986)">p</i><i style="transform:scaleX(1.038)">o</i><i style="transform:scaleX(1.112)">r</i><i style="transform:scaleX(1.408)">t</i><i> </i><i style="transform:scaleX(1.028)">J</i><i style="transform:scaleX(0.552);-webkit-text-stroke-width:1.30px">M</i><i style="transform:scaleX(1.367)">I</i><i style="transform:scaleX(0.831);-webkit-text-stroke-width:0.80px">C</i><i style="transform:scaleX(0.695);-webkit-text-stroke-width:1.14px">R</i><i style="transform:scaleX(0.729);-webkit-text-stroke-width:1.03px">O</i><i style="transform:scaleX(0.719);-webkit-text-stroke-width:1.06px">N</i></div>
<div class="ln" style="top:192px"><i style="transform:scaleX(1.028);color:#FF0000;-webkit-text-stroke-color:#FF0000">3</i><i> </i><i> </i><i style="transform:scaleX(1.195)">1</i><i style="transform:scaleX(1.008)">6</i><i style="transform:scaleX(1.038)">0</i><i>,</i><i style="transform:scaleX(1.038)">0</i><i>4</i><i style="transform:scaleX(1.195)">1</i><i> </i><i> </i><i> </i><i> </i><i> </i><i> </i><i> </i><i> </i><i> </i><i> </i><i> </i><i> </i><i> </i><i> </i><i style="transform:scaleX(1.039)">5</i><i style="transform:scaleX(0.552);-webkit-text-stroke-width:1.30px">M</i><i style="transform:scaleX(0.703);-webkit-text-stroke-width:1.11px">A</i><i style="transform:scaleX(1.028)">3</i><i style="transform:scaleX(0.667);-webkit-text-stroke-width:1.24px">H</i><i style="transform:scaleX(0.829);-webkit-text-stroke-width:0.80px">E</i><i style="transform:scaleX(1.051)">7</i><i style="transform:scaleX(0.552);-webkit-text-stroke-width:1.30px">M</i></div>
<div class="ln" style="top:208px"><i> </i><i> </i><i>S</i><i style="transform:scaleX(0.780);-webkit-text-stroke-width:0.90px">T</i><i style="transform:scaleX(1.008)">9</i><i style="transform:scaleX(1.195)">1</i><i style="transform:scaleX(1.008)">6</i><i style="transform:scaleX(1.038)">0</i><i style="transform:scaleX(1.015)">8</i><i style="transform:scaleX(1.060)">2</i><i style="transform:scaleX(1.195)">1</i><i style="transform:scaleX(0.703);-webkit-text-stroke-width:1.11px">A</i><i>S</i></div>
<div class="ln" style="top:224px"><i> </i><i> </i><i style="transform:scaleX(0.909);-webkit-text-stroke-width:0.67px">F</i><i style="transform:scaleX(1.600)">l</i><i>a</i><i style="transform:scaleX(1.316)">s</i><i style="transform:scaleX(0.961)">h</i><i> </i><i style="transform:scaleX(0.629);-webkit-text-stroke-width:1.30px">m</i><i style="transform:scaleX(1.146)">e</i><i style="transform:scaleX(0.629);-webkit-text-stroke-width:1.30px">m</i><i style="transform:scaleX(1.038)">o</i><i style="transform:scaleX(1.112)">r</i><i>y</i><i> </i><i style="transform:scaleX(1.144)">c</i><i>a</i><i style="transform:scaleX(1.112)">r</i><i style="transform:scaleX(0.983)">d</i><i> </i><i style="transform:scaleX(1.038)">o</i><i style="transform:scaleX(1.112)">r</i><i> </i><i style="transform:scaleX(1.312)">f</i><i style="transform:scaleX(1.600)">l</i><i>a</i><i style="transform:scaleX(1.316)">s</i><i style="transform:scaleX(0.961)">h</i><i> </i><i style="transform:scaleX(0.983)">d</i><i style="transform:scaleX(1.600)">i</i><i style="transform:scaleX(1.316)">s</i><i style="transform:scaleX(0.936);-webkit-text-stroke-width:0.63px">k</i><i> </i><i> </i><i> </i><i> </i><i> </i><i> </i><i> </i><i> </i><i> </i><i> </i><i> </i><i> </i><i> </i><i> </i><i> </i><i> </i><i style="transform:scaleX(0.909);-webkit-text-stroke-width:0.67px">F</i><i style="transform:scaleX(0.703);-webkit-text-stroke-width:1.11px">A</i><i style="transform:scaleX(0.780);-webkit-text-stroke-width:0.90px">T</i><i style="transform:scaleX(1.386)">-</i><i style="transform:scaleX(1.028)">3</i><i style="transform:scaleX(1.060)">2</i></div>
<div class="ln" style="top:240px"><i style="color:#FF0000;-webkit-text-stroke-color:#FF0000">4</i><i> </i><i> </i><i> </i><i> </i><i style="transform:scaleX(1.015)">8</i><i>,</i><i style="transform:scaleX(1.038)">0</i><i style="transform:scaleX(1.195)">1</i><i style="transform:scaleX(1.195)">1</i><i> </i><i> </i><i style="transform:scaleX(0.909);-webkit-text-stroke-width:0.67px">F</i><i style="transform:scaleX(1.600)">l</i><i>a</i><i style="transform:scaleX(1.316)">s</i><i style="transform:scaleX(0.961)">h</i><i> </i><i style="transform:scaleX(0.909);-webkit-text-stroke-width:0.67px">F</i><i style="transform:scaleX(1.039)">5</i><i style="transform:scaleX(1.015)">8</i><i style="transform:scaleX(1.015)">8</i><i style="transform:scaleX(1.038)">0</i><i style="transform:scaleX(1.008)">6</i><i style="transform:scaleX(1.195)">1</i><i style="transform:scaleX(0.703);-webkit-text-stroke-width:1.11px">A</i><i> </i><i> </i><i> </i><i> </i><i> </i><i> </i><i> </i><i> </i><i> </i><i> </i><i> </i><i> </i><i> </i><i> </i><i> </i><i> </i><i> </i><i> </i><i style="transform:scaleX(0.659);-webkit-text-stroke-width:1.27px;color:#FF0000;-webkit-text-stroke-color:#FF0000">K</i><i>:</i><i> </i><i> </i><i> </i><i> </i><i style="transform:scaleX(1.015)">8</i><i>,</i><i style="transform:scaleX(1.038)">0</i><i style="transform:scaleX(1.195)">1</i><i style="transform:scaleX(1.008)">9</i></div>
<div class="ln" style="top:256px"><i> </i><i> </i><i> </i><i> </i><i> </i><i> </i><i> </i><i> </i><i> </i><i> </i><i> </i><i> </i><i> </i><i> </i><i> </i><i> </i><i> </i><i> </i><i> </i><i> </i><i> </i><i> </i><i> </i><i> </i><i> </i><i> </i><i> </i><i> </i><i> </i><i> </i><i> </i><i> </i><i> </i><i> </i><i> </i><i> </i><i> </i><i> </i><i> </i><i> </i><i> </i><i> </i><i> </i><i> </i><i> </i><i> </i><i> </i><i> </i><i> </i><i> </i><i> </i><i> </i><i> </i><i> </i><i style="transform:scaleX(1.038)">0</i></div>
</div>
<div class="a" style="left:34px;top:494px;width:370px;height:1px;background:#FFFFFF;"></div>
<div class="a" style="left:34px;top:494px;width:1px;height:62px;background:#FFFFFF;"></div>
<div class="a" style="left:34px;top:555px;width:370px;height:1px;background:#FFFFFF;"></div>
<div class="a" style="left:403px;top:494px;width:1px;height:62px;background:#FFFFFF;"></div>
<div class="a" style="left:33px;top:493px;width:370px;height:1px;background:#808080;"></div>
<div class="a" style="left:33px;top:493px;width:1px;height:62px;background:#808080;"></div>
<div class="a" style="left:33px;top:554px;width:370px;height:1px;background:#808080;"></div>
<div class="a" style="left:402px;top:493px;width:1px;height:62px;background:#808080;"></div>
<div class="a" style="left:45px;top:493px;width:348px;height:2px;background:#D4D0C8;"></div>
<div class="lb" style="left:46px;top:485px;"><i style="transform:scaleX(0.734);-webkit-text-stroke-width:0.50px">У</i><i style="transform:scaleX(0.861);-webkit-text-stroke-width:0.40px">Т</i><i style="transform:scaleX(0.775);-webkit-text-stroke-width:0.50px">О</i><i style="transform:scaleX(0.812);-webkit-text-stroke-width:0.46px">Ч</i><i style="transform:scaleX(0.747);-webkit-text-stroke-width:0.50px">Н</i><i style="transform:scaleX(0.747);-webkit-text-stroke-width:0.50px">И</i><i style="transform:scaleX(0.861);-webkit-text-stroke-width:0.40px">Т</i><i style="transform:scaleX(0.932);-webkit-text-stroke-width:0.35px">Е</i><i> </i><i>д</i><i>и</i><i style="transform:scaleX(1.114)">а</i><i>п</i><i style="transform:scaleX(1.114)">а</i><i style="transform:scaleX(1.321)">з</i><i style="transform:scaleX(1.038)">о</i><i>н</i><i> </i><i style="transform:scaleX(1.173)">с</i><i style="transform:scaleX(1.189)">е</i><i>к</i><i style="transform:scaleX(1.079)">т</i><i style="transform:scaleX(1.038)">о</i><i>р</i><i style="transform:scaleX(1.038)">о</i><i style="transform:scaleX(1.048)">в</i><i> </i><i style="transform:scaleX(1.114)">а</i><i>н</i><i style="transform:scaleX(1.114)">а</i><i>л</i><i>и</i><i style="transform:scaleX(1.321)">з</i><i>и</i><i>р</i><i>у</i><i style="transform:scaleX(1.189)">е</i><i style="transform:scaleX(0.846);-webkit-text-stroke-width:0.42px">м</i><i style="transform:scaleX(1.038)">о</i><i style="transform:scaleX(1.201)">г</i><i style="transform:scaleX(1.038)">о</i><i> </i><i>у</i><i>ч</i><i style="transform:scaleX(1.114)">а</i><i style="transform:scaleX(1.173)">с</i><i style="transform:scaleX(1.079)">т</i><i>к</i><i style="transform:scaleX(1.114)">а</i></div>
<div class="lb" style="left:48px;top:513px;"><i style="transform:scaleX(0.747);-webkit-text-stroke-width:0.50px">Н</i><i style="transform:scaleX(1.114)">а</i><i>ч</i><i style="transform:scaleX(1.114)">а</i><i>л</i><i style="transform:scaleX(1.079)">ь</i><i>н</i><i style="transform:scaleX(0.787);-webkit-text-stroke-width:0.48px">ы</i><i>й</i></div>
<div class="a" style="left:127px;top:512px;width:84px;height:21px;background:#FFFFFF;"></div>
<div class="a" style="left:127px;top:512px;width:84px;height:1px;background:#808080;"></div>
<div class="a" style="left:127px;top:512px;width:1px;height:21px;background:#808080;"></div>
<div class="a" style="left:128px;top:513px;width:82px;height:1px;background:#404040;"></div>
<div class="a" style="left:128px;top:513px;width:1px;height:19px;background:#404040;"></div>
<div class="a" style="left:127px;top:532px;width:84px;height:1px;background:#FFFFFF;"></div>
<div class="a" style="left:210px;top:512px;width:1px;height:21px;background:#FFFFFF;"></div>
<div class="a" style="left:128px;top:531px;width:82px;height:1px;background:#D4D0C8;"></div>
<div class="a" style="left:209px;top:513px;width:1px;height:19px;background:#D4D0C8;"></div>
<div class="lb numc" style="left:201px;top:514px"><i style="transform:scaleX(1.180)">0</i></div>
<div class="lb" style="left:228px;top:513px;"><i style="transform:scaleX(0.773);-webkit-text-stroke-width:0.50px">К</i><i style="transform:scaleX(1.038)">о</i><i>н</i><i style="transform:scaleX(1.189)">е</i><i>ч</i><i>н</i><i style="transform:scaleX(0.787);-webkit-text-stroke-width:0.48px">ы</i><i>й</i></div>
<div class="a" style="left:301px;top:512px;width:84px;height:21px;background:#FFFFFF;"></div>
<div class="a" style="left:301px;top:512px;width:84px;height:1px;background:#808080;"></div>
<div class="a" style="left:301px;top:512px;width:1px;height:21px;background:#808080;"></div>
<div class="a" style="left:302px;top:513px;width:82px;height:1px;background:#404040;"></div>
<div class="a" style="left:302px;top:513px;width:1px;height:19px;background:#404040;"></div>
<div class="a" style="left:301px;top:532px;width:84px;height:1px;background:#FFFFFF;"></div>
<div class="a" style="left:384px;top:512px;width:1px;height:21px;background:#FFFFFF;"></div>
<div class="a" style="left:302px;top:531px;width:82px;height:1px;background:#D4D0C8;"></div>
<div class="a" style="left:383px;top:513px;width:1px;height:19px;background:#D4D0C8;"></div>
<div class="lb numc" style="left:318px;top:514px"><i style="transform:scaleX(1.210)">3</i><i style="transform:scaleX(1.420)">1</i><i style="transform:scaleX(1.247)">2</i><i style="transform:scaleX(1.241)">5</i><i style="transform:scaleX(1.180)">8</i><i style="transform:scaleX(1.420)">1</i><i style="transform:scaleX(1.180)">8</i><i style="transform:scaleX(1.180)">0</i><i style="transform:scaleX(1.234)">7</i></div>
<div class="a" style="left:433px;top:494px;width:311px;height:1px;background:#FFFFFF;"></div>
<div class="a" style="left:433px;top:494px;width:1px;height:62px;background:#FFFFFF;"></div>
<div class="a" style="left:433px;top:555px;width:311px;height:1px;background:#FFFFFF;"></div>
<div class="a" style="left:743px;top:494px;width:1px;height:62px;background:#FFFFFF;"></div>
<div class="a" style="left:432px;top:493px;width:311px;height:1px;background:#808080;"></div>
<div class="a" style="left:432px;top:493px;width:1px;height:62px;background:#808080;"></div>
<div class="a" style="left:432px;top:554px;width:311px;height:1px;background:#808080;"></div>
<div class="a" style="left:742px;top:493px;width:1px;height:62px;background:#808080;"></div>
<div class="a" style="left:452px;top:493px;width:272px;height:2px;background:#D4D0C8;"></div>
<div class="lb" style="left:455px;top:485px;"><i style="transform:scaleX(0.734);-webkit-text-stroke-width:0.50px">У</i><i style="transform:scaleX(0.773);-webkit-text-stroke-width:0.50px">К</i><i style="transform:scaleX(0.703);-webkit-text-stroke-width:0.50px">А</i><i style="transform:scaleX(0.554);-webkit-text-stroke-width:0.50px">Ж</i><i style="transform:scaleX(0.747);-webkit-text-stroke-width:0.50px">И</i><i style="transform:scaleX(0.861);-webkit-text-stroke-width:0.40px">Т</i><i style="transform:scaleX(0.932);-webkit-text-stroke-width:0.35px">Е</i><i> </i><i>л</i><i style="transform:scaleX(1.038)">о</i><i style="transform:scaleX(1.201)">г</i><i>и</i><i>ч</i><i style="transform:scaleX(1.189)">е</i><i style="transform:scaleX(1.173)">с</i><i>к</i><i>и</i><i>й</i><i> </i><i>и</i><i>л</i><i>и</i><i> </i><i style="transform:scaleX(0.863);-webkit-text-stroke-width:0.40px">ф</i><i>и</i><i style="transform:scaleX(1.321)">з</i><i>и</i><i>ч</i><i style="transform:scaleX(1.189)">е</i><i style="transform:scaleX(1.173)">с</i><i>к</i><i>и</i><i>й</i><i> </i><i>д</i><i>и</i><i style="transform:scaleX(1.173)">с</i><i>к</i></div>
<div class="lb" style="left:446px;top:502px;"><i>Б</i><i>у</i><i>к</i><i style="transform:scaleX(1.048)">в</i><i style="transform:scaleX(1.114)">а</i><i> </i><i>л</i><i style="transform:scaleX(1.038)">о</i><i style="transform:scaleX(1.201)">г</i><i>и</i><i>ч</i><i style="transform:scaleX(1.189)">е</i><i style="transform:scaleX(1.173)">с</i><i>к</i><i style="transform:scaleX(1.038)">о</i><i style="transform:scaleX(1.201)">г</i><i style="transform:scaleX(1.038)">о</i><i> </i><i>д</i><i>и</i><i style="transform:scaleX(1.173)">с</i><i>к</i><i style="transform:scaleX(1.114)">а</i></div>
<div class="lb" style="left:446px;top:516px;"><i>и</i><i>л</i><i>и</i></div>
<div class="lb" style="left:446px;top:531px;"><i style="transform:scaleX(0.747);-webkit-text-stroke-width:0.50px">Н</i><i style="transform:scaleX(1.038)">о</i><i style="transform:scaleX(0.846);-webkit-text-stroke-width:0.42px">м</i><i style="transform:scaleX(1.189)">е</i><i>р</i><i> </i><i style="transform:scaleX(0.863);-webkit-text-stroke-width:0.40px">ф</i><i>и</i><i style="transform:scaleX(1.321)">з</i><i>и</i><i>ч</i><i style="transform:scaleX(1.189)">е</i><i style="transform:scaleX(1.173)">с</i><i>к</i><i style="transform:scaleX(1.038)">о</i><i style="transform:scaleX(1.201)">г</i><i style="transform:scaleX(1.038)">о</i><i> </i><i>д</i><i>и</i><i style="transform:scaleX(1.173)">с</i><i>к</i><i style="transform:scaleX(1.114)">а</i></div>
<div class="a" style="left:710px;top:512px;width:21px;height:21px;background:#FFFFFF;"></div>
<div class="a" style="left:710px;top:512px;width:21px;height:1px;background:#808080;"></div>
<div class="a" style="left:710px;top:512px;width:1px;height:21px;background:#808080;"></div>
<div class="a" style="left:711px;top:513px;width:19px;height:1px;background:#404040;"></div>
<div class="a" style="left:711px;top:513px;width:1px;height:19px;background:#404040;"></div>
<div class="a" style="left:710px;top:532px;width:21px;height:1px;background:#FFFFFF;"></div>
<div class="a" style="left:730px;top:512px;width:1px;height:21px;background:#FFFFFF;"></div>
<div class="a" style="left:711px;top:531px;width:19px;height:1px;background:#D4D0C8;"></div>
<div class="a" style="left:729px;top:513px;width:1px;height:19px;background:#D4D0C8;"></div>
<div class="num" style="left:718px;top:515px;">3</div>
<div class="a" style="left:724px;top:515px;width:1px;height:14px;background:#000;"></div>
<div class="a" style="left:758px;top:494px;width:120px;height:1px;background:#FFFFFF;"></div>
<div class="a" style="left:758px;top:494px;width:1px;height:78px;background:#FFFFFF;"></div>
<div class="a" style="left:758px;top:571px;width:120px;height:1px;background:#FFFFFF;"></div>
<div class="a" style="left:877px;top:494px;width:1px;height:78px;background:#FFFFFF;"></div>
<div class="a" style="left:757px;top:493px;width:120px;height:1px;background:#808080;"></div>
<div class="a" style="left:757px;top:493px;width:1px;height:78px;background:#808080;"></div>
<div class="a" style="left:757px;top:570px;width:120px;height:1px;background:#808080;"></div>
<div class="a" style="left:876px;top:493px;width:1px;height:78px;background:#808080;"></div>
<div class="a" style="left:764px;top:493px;width:108px;height:2px;background:#D4D0C8;"></div>
<div class="lb" style="left:765px;top:485px;"><i style="transform:scaleX(0.747);-webkit-text-stroke-width:0.50px">Н</i><i style="transform:scaleX(1.114)">а</i><i style="transform:scaleX(1.173)">с</i><i style="transform:scaleX(1.079)">т</i><i>р</i><i style="transform:scaleX(1.038)">о</i><i>и</i><i style="transform:scaleX(1.079)">т</i><i style="transform:scaleX(1.079)">ь</i><i> </i><i>п</i><i style="transform:scaleX(1.038)">о</i><i>и</i><i style="transform:scaleX(1.173)">с</i><i>к</i></div>
<div class="a" style="left:794px;top:504px;width:13px;height:13px;background:#FFFFFF;"></div>
<div class="a" style="left:794px;top:504px;width:13px;height:1px;background:#808080;"></div>
<div class="a" style="left:794px;top:504px;width:1px;height:13px;background:#808080;"></div>
<div class="a" style="left:795px;top:505px;width:11px;height:1px;background:#404040;"></div>
<div class="a" style="left:795px;top:505px;width:1px;height:11px;background:#404040;"></div>
<div class="a" style="left:794px;top:516px;width:13px;height:1px;background:#FFFFFF;"></div>
<div class="a" style="left:806px;top:504px;width:1px;height:13px;background:#FFFFFF;"></div>
<div class="a" style="left:795px;top:515px;width:11px;height:1px;background:#D4D0C8;"></div>
<div class="a" style="left:805px;top:505px;width:1px;height:11px;background:#D4D0C8;"></div>
<svg class="a" style="left:0;top:0" width="893" height="634"><rect x="803" y="507" width="1" height="1" fill="#000"/><rect x="802" y="508" width="1" height="1" fill="#000"/><rect x="803" y="508" width="1" height="1" fill="#000"/><rect x="797" y="509" width="1" height="1" fill="#000"/><rect x="801" y="509" width="1" height="1" fill="#000"/><rect x="802" y="509" width="1" height="1" fill="#000"/><rect x="803" y="509" width="1" height="1" fill="#000"/><rect x="797" y="510" width="1" height="1" fill="#000"/><rect x="798" y="510" width="1" height="1" fill="#000"/><rect x="800" y="510" width="1" height="1" fill="#000"/><rect x="801" y="510" width="1" height="1" fill="#000"/><rect x="802" y="510" width="1" height="1" fill="#000"/><rect x="797" y="511" width="1" height="1" fill="#000"/><rect x="798" y="511" width="1" height="1" fill="#000"/><rect x="799" y="511" width="1" height="1" fill="#000"/><rect x="800" y="511" width="1" height="1" fill="#000"/><rect x="801" y="511" width="1" height="1" fill="#000"/><rect x="798" y="512" width="1" height="1" fill="#000"/><rect x="799" y="512" width="1" height="1" fill="#000"/><rect x="800" y="512" width="1" height="1" fill="#000"/><rect x="799" y="513" width="1" height="1" fill="#000"/></svg>
<div class="lb" style="left:811px;top:502px;-webkit-text-stroke:0.5px #000;"><i style="transform:scaleX(0.740);-webkit-text-stroke-width:0.50px">N</i><i style="transform:scaleX(0.861);-webkit-text-stroke-width:0.40px">T</i><i>F</i><i style="transform:scaleX(1.030)">S</i></div>
<div class="a" style="left:794px;top:521px;width:13px;height:13px;background:#FFFFFF;"></div>
<div class="a" style="left:794px;top:521px;width:13px;height:1px;background:#808080;"></div>
<div class="a" style="left:794px;top:521px;width:1px;height:13px;background:#808080;"></div>
<div class="a" style="left:795px;top:522px;width:11px;height:1px;background:#404040;"></div>
<div class="a" style="left:795px;top:522px;width:1px;height:11px;background:#404040;"></div>
<div class="a" style="left:794px;top:533px;width:13px;height:1px;background:#FFFFFF;"></div>
<div class="a" style="left:806px;top:521px;width:1px;height:13px;background:#FFFFFF;"></div>
<div class="a" style="left:795px;top:532px;width:11px;height:1px;background:#D4D0C8;"></div>
<div class="a" style="left:805px;top:522px;width:1px;height:11px;background:#D4D0C8;"></div>
<div class="lb" style="left:812px;top:519px;-webkit-text-stroke:0.5px #000;"><i>F</i><i style="transform:scaleX(0.703);-webkit-text-stroke-width:0.50px">A</i><i style="transform:scaleX(0.861);-webkit-text-stroke-width:0.40px">T</i></div>
<div class="a" style="left:770px;top:540px;width:96px;height:18px;background:#D4D0C8;"></div>
<div class="a" style="left:770px;top:540px;width:96px;height:1px;background:#FFFFFF;"></div>
<div class="a" style="left:770px;top:540px;width:1px;height:18px;background:#FFFFFF;"></div>
<div class="a" style="left:771px;top:556px;width:95px;height:1px;background:#808080;"></div>
<div class="a" style="left:864px;top:541px;width:1px;height:17px;background:#808080;"></div>
<div class="a" style="left:770px;top:557px;width:96px;height:1px;background:#404040;"></div>
<div class="a" style="left:865px;top:540px;width:1px;height:18px;background:#404040;"></div>
<div class="lb" style="left:772px;top:540px;-webkit-text-stroke:0.5px #000;"><i style="transform:scaleX(0.699);-webkit-text-stroke-width:0.50px">Ф</i><i>и</i><i>л</i><i style="transform:scaleX(1.079)">ь</i><i style="transform:scaleX(1.079)">т</i><i>р</i><i> </i><i>п</i><i style="transform:scaleX(1.038)">о</i><i>и</i><i style="transform:scaleX(1.173)">с</i><i>к</i><i style="transform:scaleX(1.114)">а</i></div>
<div class="a" style="left:34px;top:574px;width:710px;height:1px;background:#FFFFFF;"></div>
<div class="a" style="left:34px;top:574px;width:1px;height:38px;background:#FFFFFF;"></div>
<div class="a" style="left:34px;top:611px;width:710px;height:1px;background:#FFFFFF;"></div>
<div class="a" style="left:743px;top:574px;width:1px;height:38px;background:#FFFFFF;"></div>
<div class="a" style="left:33px;top:573px;width:710px;height:1px;background:#808080;"></div>
<div class="a" style="left:33px;top:573px;width:1px;height:38px;background:#808080;"></div>
<div class="a" style="left:33px;top:610px;width:710px;height:1px;background:#808080;"></div>
<div class="a" style="left:742px;top:573px;width:1px;height:38px;background:#808080;"></div>
<div class="a" style="left:250px;top:573px;width:278px;height:2px;background:#D4D0C8;"></div>
<div class="lb" style="left:252px;top:565px;"><i style="transform:scaleX(0.734);-webkit-text-stroke-width:0.50px">У</i><i style="transform:scaleX(0.773);-webkit-text-stroke-width:0.50px">К</i><i style="transform:scaleX(0.703);-webkit-text-stroke-width:0.50px">А</i><i style="transform:scaleX(0.554);-webkit-text-stroke-width:0.50px">Ж</i><i style="transform:scaleX(0.747);-webkit-text-stroke-width:0.50px">И</i><i style="transform:scaleX(0.861);-webkit-text-stroke-width:0.40px">Т</i><i style="transform:scaleX(0.932);-webkit-text-stroke-width:0.35px">Е</i><i> </i><i>п</i><i style="transform:scaleX(1.114)">а</i><i>п</i><i>к</i><i>у</i><i> </i><i>д</i><i>л</i><i style="transform:scaleX(1.002)">я</i><i> </i><i style="transform:scaleX(1.321)">з</i><i style="transform:scaleX(1.114)">а</i><i>п</i><i>и</i><i style="transform:scaleX(1.173)">с</i><i>и</i><i> </i><i style="transform:scaleX(0.863);-webkit-text-stroke-width:0.40px">ф</i><i style="transform:scaleX(1.114)">а</i><i>й</i><i>л</i><i style="transform:scaleX(1.038)">о</i><i style="transform:scaleX(1.048)">в</i><i> </i><i style="transform:scaleX(1.114)">а</i><i>н</i><i style="transform:scaleX(1.114)">а</i><i>л</i><i>и</i><i style="transform:scaleX(1.321)">з</i><i style="transform:scaleX(1.114)">а</i></div>
<div class="a" style="left:47px;top:580px;width:25px;height:25px;background:#FCFCFC;"></div>
<div class="a" style="left:47px;top:580px;width:25px;height:1px;background:#FFFFFF;"></div>
<div class="a" style="left:47px;top:580px;width:1px;height:25px;background:#FFFFFF;"></div>
<div class="a" style="left:48px;top:603px;width:24px;height:1px;background:#808080;"></div>
<div class="a" style="left:70px;top:581px;width:1px;height:24px;background:#808080;"></div>
<div class="a" style="left:47px;top:604px;width:25px;height:1px;background:#404040;"></div>
<div class="a" style="left:71px;top:580px;width:1px;height:25px;background:#404040;"></div>
<svg class="a" style="left:0;top:0" width="893" height="634"><rect x="52" y="590" width="1" height="1" fill="#FFFF00"/><rect x="54" y="590" width="1" height="1" fill="#FFFF00"/><rect x="53" y="591" width="1" height="1" fill="#FFFF00"/><rect x="55" y="591" width="1" height="1" fill="#FFFF00"/><rect x="57" y="591" width="1" height="1" fill="#FFFF00"/><rect x="59" y="591" width="1" height="1" fill="#FFFF00"/><rect x="52" y="592" width="1" height="1" fill="#FFFF00"/><rect x="54" y="592" width="1" height="1" fill="#FFFF00"/><rect x="56" y="592" width="1" height="1" fill="#FFFF00"/><rect x="58" y="592" width="1" height="1" fill="#FFFF00"/><rect x="60" y="592" width="1" height="1" fill="#FFFF00"/><rect x="53" y="593" width="1" height="1" fill="#FFFF00"/><rect x="55" y="593" width="1" height="1" fill="#FFFF00"/><rect x="52" y="594" width="1" height="1" fill="#FFFF00"/><rect x="54" y="594" width="1" height="1" fill="#FFFF00"/><rect x="53" y="595" width="1" height="1" fill="#FFFF00"/><rect x="52" y="596" width="1" height="1" fill="#FFFF00"/><rect x="56" y="594" width="1" height="1" fill="#808000"/><rect x="57" y="594" width="1" height="1" fill="#808000"/><rect x="58" y="594" width="1" height="1" fill="#808000"/><rect x="59" y="594" width="1" height="1" fill="#808000"/><rect x="60" y="594" width="1" height="1" fill="#808000"/><rect x="61" y="594" width="1" height="1" fill="#808000"/><rect x="62" y="594" width="1" height="1" fill="#808000"/><rect x="63" y="594" width="1" height="1" fill="#808000"/><rect x="64" y="594" width="1" height="1" fill="#808000"/><rect x="55" y="595" width="1" height="1" fill="#808000"/><rect x="56" y="595" width="1" height="1" fill="#808000"/><rect x="57" y="595" width="1" height="1" fill="#808000"/><rect x="58" y="595" width="1" height="1" fill="#808000"/><rect x="59" y="595" width="1" height="1" fill="#808000"/><rect x="60" y="595" width="1" height="1" fill="#808000"/><rect x="61" y="595" width="1" height="1" fill="#808000"/><rect x="62" y="595" width="1" height="1" fill="#808000"/><rect x="63" y="595" width="1" height="1" fill="#808000"/><rect x="54" y="596" width="1" height="1" fill="#808000"/><rect x="55" y="596" width="1" height="1" fill="#808000"/><rect x="56" y="596" width="1" height="1" fill="#808000"/><rect x="57" y="596" width="1" height="1" fill="#808000"/><rect x="58" y="596" width="1" height="1" fill="#808000"/><rect x="59" y="596" width="1" height="1" fill="#808000"/><rect x="60" y="596" width="1" height="1" fill="#808000"/><rect x="61" y="596" width="1" height="1" fill="#808000"/><rect x="62" y="596" width="1" height="1" fill="#808000"/><rect x="53" y="597" width="1" height="1" fill="#808000"/><rect x="54" y="597" width="1" height="1" fill="#808000"/><rect x="55" y="597" width="1" height="1" fill="#808000"/><rect x="56" y="597" width="1" height="1" fill="#808000"/><rect x="57" y="597" width="1" height="1" fill="#808000"/><rect x="58" y="597" width="1" height="1" fill="#808000"/><rect x="59" y="597" width="1" height="1" fill="#808000"/><rect x="60" y="597" width="1" height="1" fill="#808000"/><rect x="61" y="597" width="1" height="1" fill="#808000"/><rect x="60" y="586" width="1" height="1" fill="#000"/><rect x="61" y="586" width="1" height="1" fill="#000"/><rect x="62" y="586" width="1" height="1" fill="#000"/><rect x="59" y="587" width="1" height="1" fill="#000"/><rect x="63" y="587" width="1" height="1" fill="#000"/><rect x="65" y="587" width="1" height="1" fill="#000"/><rect x="64" y="588" width="1" height="1" fill="#000"/><rect x="65" y="588" width="1" height="1" fill="#000"/><rect x="63" y="589" width="1" height="1" fill="#000"/><rect x="64" y="589" width="1" height="1" fill="#000"/><rect x="65" y="589" width="1" height="1" fill="#000"/><rect x="52" y="589" width="1" height="1" fill="#000"/><rect x="53" y="589" width="1" height="1" fill="#000"/><rect x="54" y="589" width="1" height="1" fill="#000"/><rect x="55" y="590" width="1" height="1" fill="#000"/><rect x="56" y="590" width="1" height="1" fill="#000"/><rect x="57" y="590" width="1" height="1" fill="#000"/><rect x="58" y="590" width="1" height="1" fill="#000"/><rect x="59" y="590" width="1" height="1" fill="#000"/><rect x="60" y="590" width="1" height="1" fill="#000"/><rect x="61" y="590" width="1" height="1" fill="#000"/><rect x="51" y="590" width="1" height="1" fill="#000"/><rect x="51" y="591" width="1" height="1" fill="#000"/><rect x="51" y="592" width="1" height="1" fill="#000"/><rect x="51" y="593" width="1" height="1" fill="#000"/><rect x="51" y="594" width="1" height="1" fill="#000"/><rect x="51" y="595" width="1" height="1" fill="#000"/><rect x="51" y="596" width="1" height="1" fill="#000"/><rect x="51" y="597" width="1" height="1" fill="#000"/><rect x="51" y="598" width="1" height="1" fill="#000"/><rect x="61" y="591" width="1" height="1" fill="#000"/><rect x="61" y="592" width="1" height="1" fill="#000"/><rect x="56" y="593" width="1" height="1" fill="#000"/><rect x="57" y="593" width="1" height="1" fill="#000"/><rect x="58" y="593" width="1" height="1" fill="#000"/><rect x="59" y="593" width="1" height="1" fill="#000"/><rect x="60" y="593" width="1" height="1" fill="#000"/><rect x="61" y="593" width="1" height="1" fill="#000"/><rect x="62" y="593" width="1" height="1" fill="#000"/><rect x="63" y="593" width="1" height="1" fill="#000"/><rect x="64" y="593" width="1" height="1" fill="#000"/><rect x="65" y="593" width="1" height="1" fill="#000"/><rect x="55" y="594" width="1" height="1" fill="#000"/><rect x="65" y="594" width="1" height="1" fill="#000"/><rect x="54" y="595" width="1" height="1" fill="#000"/><rect x="64" y="595" width="1" height="1" fill="#000"/><rect x="53" y="596" width="1" height="1" fill="#000"/><rect x="63" y="596" width="1" height="1" fill="#000"/><rect x="52" y="597" width="1" height="1" fill="#000"/><rect x="62" y="597" width="1" height="1" fill="#000"/><rect x="51" y="598" width="1" height="1" fill="#000"/><rect x="52" y="598" width="1" height="1" fill="#000"/><rect x="53" y="598" width="1" height="1" fill="#000"/><rect x="54" y="598" width="1" height="1" fill="#000"/><rect x="55" y="598" width="1" height="1" fill="#000"/><rect x="56" y="598" width="1" height="1" fill="#000"/><rect x="57" y="598" width="1" height="1" fill="#000"/><rect x="58" y="598" width="1" height="1" fill="#000"/><rect x="59" y="598" width="1" height="1" fill="#000"/><rect x="60" y="598" width="1" height="1" fill="#000"/><rect x="61" y="598" width="1" height="1" fill="#000"/></svg>
<div class="lb" style="left:80px;top:583px;"><i>F</i><i>:</i><i>\</i><i style="transform:scaleX(0.597);-webkit-text-stroke-width:0.50px">M</i><i style="transform:scaleX(1.114)">a</i><i style="transform:scaleX(1.410)">s</i><i style="transform:scaleX(0.669);-webkit-text-stroke-width:0.50px">m</i><i style="transform:scaleX(1.065)">3</i><i style="transform:scaleX(1.098)">2</i><i>\</i><i style="transform:scaleX(1.386)">-</i><i>F</i><i style="transform:scaleX(1.038)">o</i><i style="transform:scaleX(0.669);-webkit-text-stroke-width:0.50px">m</i><i style="transform:scaleX(1.410)">s</i><i style="transform:scaleX(1.038)">o</i><i style="transform:scaleX(1.456)">f</i><i style="transform:scaleX(1.600)">t</i><i style="transform:scaleX(0.759);-webkit-text-stroke-width:0.50px">D</i><i style="transform:scaleX(1.114)">a</i><i style="transform:scaleX(1.600)">t</i><i style="transform:scaleX(1.114)">a</i><i style="transform:scaleX(0.779);-webkit-text-stroke-width:0.49px">R</i><i style="transform:scaleX(1.189)">e</i><i style="transform:scaleX(1.173)">c</i><i style="transform:scaleX(1.038)">o</i><i style="transform:scaleX(0.992)">v</i><i style="transform:scaleX(1.189)">e</i><i style="transform:scaleX(1.446)">r</i><i>y</i></div>
<div class="a" style="left:766px;top:586px;width:105px;height:25px;background:#000;"></div>
<div class="a" style="left:767px;top:587px;width:103px;height:23px;background:#D4D0C8;"></div>
<div class="a" style="left:767px;top:587px;width:103px;height:1px;background:#FFFFFF;"></div>
<div class="a" style="left:767px;top:587px;width:1px;height:23px;background:#FFFFFF;"></div>
<div class="a" style="left:768px;top:608px;width:102px;height:1px;background:#808080;"></div>
<div class="a" style="left:868px;top:588px;width:1px;height:22px;background:#808080;"></div>
<div class="a" style="left:767px;top:609px;width:103px;height:1px;background:#404040;"></div>
<div class="a" style="left:869px;top:587px;width:1px;height:23px;background:#404040;"></div>
<div class="hd" style="left:772px;top:590px;-webkit-text-stroke:0.2px #000;"><i style="transform:scaleX(0.703)">А</i><i style="transform:scaleX(0.667)">Н</i><i style="transform:scaleX(0.703)">А</i><i style="transform:scaleX(0.683)">Л</i><i style="transform:scaleX(0.667)">И</i><i>З</i><i style="transform:scaleX(0.667)">И</i><i style="transform:scaleX(0.877)">Р</i><i style="transform:scaleX(0.729)">О</i><i style="transform:scaleX(0.797)">В</i><i style="transform:scaleX(0.703)">А</i><i style="transform:scaleX(0.780)">Т</i><i style="transform:scaleX(0.830)">Ь</i></div>

</body></html>
